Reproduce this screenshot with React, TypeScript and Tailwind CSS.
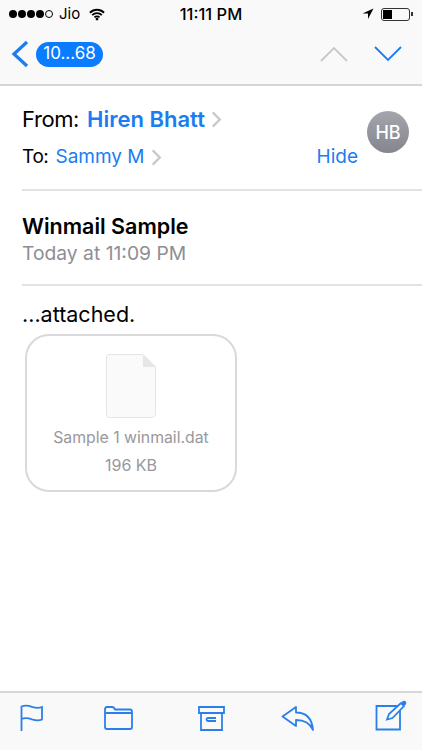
const font = { fontFamily: "Inter, 'Liberation Sans', sans-serif" };

function StatusBar() {
  return (
    <div className="relative flex h-[28px] items-center justify-between pl-[9px] pr-[9px] text-[15px] text-black">
      <div className="flex items-center">
        <span className="h-[8px] w-[8px] rounded-full bg-black" />
        <span className="ml-[1px] h-[8px] w-[8px] rounded-full bg-black" />
        <span className="ml-[1px] h-[8px] w-[8px] rounded-full bg-black" />
        <span className="ml-[1px] h-[8px] w-[8px] rounded-full bg-black" />
        <span className="ml-[1px] h-[8px] w-[8px] rounded-full border border-black" />
        <span className="ml-[6px] text-[15px]">Jio</span>
        <svg className="ml-[9px]" width="16" height="13" viewBox="0 0 17 13">
          <path d="M1 4.600a10.600 10.600 0 0 1 15 0M3.400 7.200a7.200 7.200 0 0 1 10.200 0M5.800 9.600a3.800 3.800 0 0 1 5.400 0" fill="none" stroke="#000" strokeWidth="2" />
          <circle cx="8.500" cy="11.400" r="1.500" fill="#000" />
        </svg>
      </div>
      <span className="absolute left-0 right-0 text-center text-[16.500px] font-medium">11:11 PM</span>
      <div className="flex items-center gap-[7px]">
        <svg width="12" height="12" viewBox="0 0 12 12">
          <path d="M11.500.500 0.500 5.500H6V11z" fill="#000" />
        </svg>
        <div className="flex items-center">
          <div className="h-[13px] w-[29px] rounded-[3px] border border-[#333] p-[1px]">
            <div className="h-full w-[9px] bg-black" />
          </div>
          <div className="ml-[1px] h-[4px] w-[2px] bg-[#333]" />
        </div>
      </div>
    </div>
  );
}

function NavBar() {
  return (
    <div className="flex h-[58px] items-center border-b-2 border-[#d6d6d6] pb-[4px]">
      <svg className="ml-[11px]" width="18" height="28" viewBox="0 0 18 28">
        <path d="M16 2 3 14l13 12" fill="none" stroke="#1a7df0" strokeWidth="3.200" />
      </svg>
      <div className="ml-[7px] flex h-[25px] w-[67px] items-center justify-center rounded-full bg-[#0a7cff] text-[17px] text-white">
        10...68
      </div>
      <div className="ml-auto mr-[20px] flex items-center gap-[26px]">
        <svg width="28" height="16" viewBox="0 0 28 16">
          <path d="M1 15 14 2l13 13" fill="none" stroke="#c8c8c8" strokeWidth="1.800" />
        </svg>
        <svg width="28" height="16" viewBox="0 0 28 16">
          <path d="M1 1l13 13L27 1" fill="none" stroke="#1a7df0" strokeWidth="1.800" />
        </svg>
      </div>
    </div>
  );
}

function Chevron() {
  return (
    <svg className="ml-[6px]" width="11" height="17" viewBox="0 0 11 18">
      <path d="M1.500 1.500 9 9l-7.500 7.500" fill="none" stroke="#c7c7cc" strokeWidth="2.400" />
    </svg>
  );
}

function Header() {
  return (
    <div className="relative ml-[22px] h-[105px] border-b-2 border-[#e3e3e3] pt-[18px]">
      <div className="flex h-[30px] items-center text-[22px] text-black">
        <span className="tracking-[-0.4px]">From:</span>
        <span className="ml-[8px] font-semibold text-[#1a7df0]">Hiren Bhatt</span>
        <Chevron />
      </div>
      <div className="mt-[8px] flex h-[30px] items-center text-[19px] text-black">
        <span className="tracking-[-0.4px]">To:</span>
        <span className="ml-[7px] text-[#1a7df0]">Sammy M</span>
        <Chevron />
        <span className="ml-auto mr-[64px] text-[#1a7df0]">Hide</span>
      </div>
      <div className="absolute right-[13px] top-[25px] flex h-[42px] w-[42px] items-center justify-center rounded-full bg-gradient-to-b from-[#a5a6ad] to-[#84858d] text-[18px] font-medium text-white">
        HB
      </div>
    </div>
  );
}

function Attachment() {
  return (
    <div className="ml-[25px] mt-[5px] flex h-[158px] w-[212px] flex-col items-center rounded-[24px] border-2 border-[#d9d9d9] pt-[18px]">
      <svg width="50" height="64" viewBox="0 0 50 64">
        <path d="M3 .500h34L49.500 13v47.500a3 3 0 0 1-3 3h-43a3 3 0 0 1-3-3V3A3 3 0 0 1 3 .500z" fill="#fafafa" stroke="#e4e4e4" />
        <path d="M37 .500V13h12.500z" fill="#e6e6e6" />
      </svg>
      <span className="mt-[10px] text-[15.800px] leading-[20px] text-[#98989d]">Sample 1 winmail.dat</span>
      <span className="mt-[7px] text-[16px] leading-[20px] text-[#98989d]">196 KB</span>
    </div>
  );
}

function Toolbar() {
  const c = "#2a80ea";
  return (
    <div className="mt-auto flex h-[59px] items-start border-t-2 border-[#d6d6d6] bg-[#f9f9f9] pl-[20px] pt-[11px]">
      <svg width="24" height="28" viewBox="0 0 24 28">
        <path d="M1.500 27V2.500c3.500-1.500 7-1 10.500.300 3.500 1.200 7 1.500 10 .200v12.500c-3 1.300-6.500 1-10-.200-3.500-1.300-7-1.800-10.500-.300" fill="none" stroke={c} strokeWidth="1.800" />
      </svg>
      <svg className="ml-[60px] mt-[2px]" width="29" height="24" viewBox="0 0 29 24">
        <path d="M1 21V3.500Q1 1 3 1h5q2 0 3 2.500h15q2 0 2 2.500v15q0 2-2 2H3q-2 0-2-2zM1 7h27" fill="none" stroke={c} strokeWidth="1.800" />
      </svg>
      <svg className="ml-[65px] mt-[2px]" width="27" height="25" viewBox="0 0 27 25">
        <path d="M1 1h25v6H1zM3 7v17h21V7M18 12h-8a1.500 1.500 0 0 0 0 3h8" fill="none" stroke={c} strokeWidth="1.800" />
      </svg>
      <svg className="ml-[56px] mt-[2px]" width="33" height="25" viewBox="0 0 33 25">
        <path d="M1.500 10.500 15 1v5.500c10 0 16 6 17 17.500-3-7-8.500-10-17-10V20z" fill="none" stroke={c} strokeWidth="1.800" strokeLinejoin="round" />
      </svg>
      <svg className="ml-[61px] mt-[-4px]" width="32" height="31" viewBox="0 0 32 31">
        <path d="M23 6H1.500v23.500H25V11" fill="none" stroke={c} strokeWidth="1.800" />
        <path d="M12 19.500 14 14 26 3l3 3-11.500 12z" fill="none" stroke={c} strokeWidth="1.800" />
        <circle cx="29" cy="3" r="2.300" fill={c} />
      </svg>
    </div>
  );
}

export default function App() {
  return (
    <div className="flex h-[750px] w-[422px] flex-col overflow-hidden bg-white" style={font}>
      <div className="bg-[#f9f9f9]">
        <StatusBar />
        <NavBar />
      </div>
      <Header />
      <div className="ml-[22px] h-[95px] border-b-2 border-[#e3e3e3] pt-[20px]">
        <div className="text-[21.500px] font-semibold leading-[30px] text-black">Winmail Sample</div>
        <div className="text-[19.300px] leading-[24px] text-[#8e8e93]">Today at 11:09 PM</div>
      </div>
      <div className="ml-[22px] mt-[13px] text-[21.500px] leading-[30px] text-black">...attached.</div>
      <Attachment />
      <Toolbar />
    </div>
  );
}
